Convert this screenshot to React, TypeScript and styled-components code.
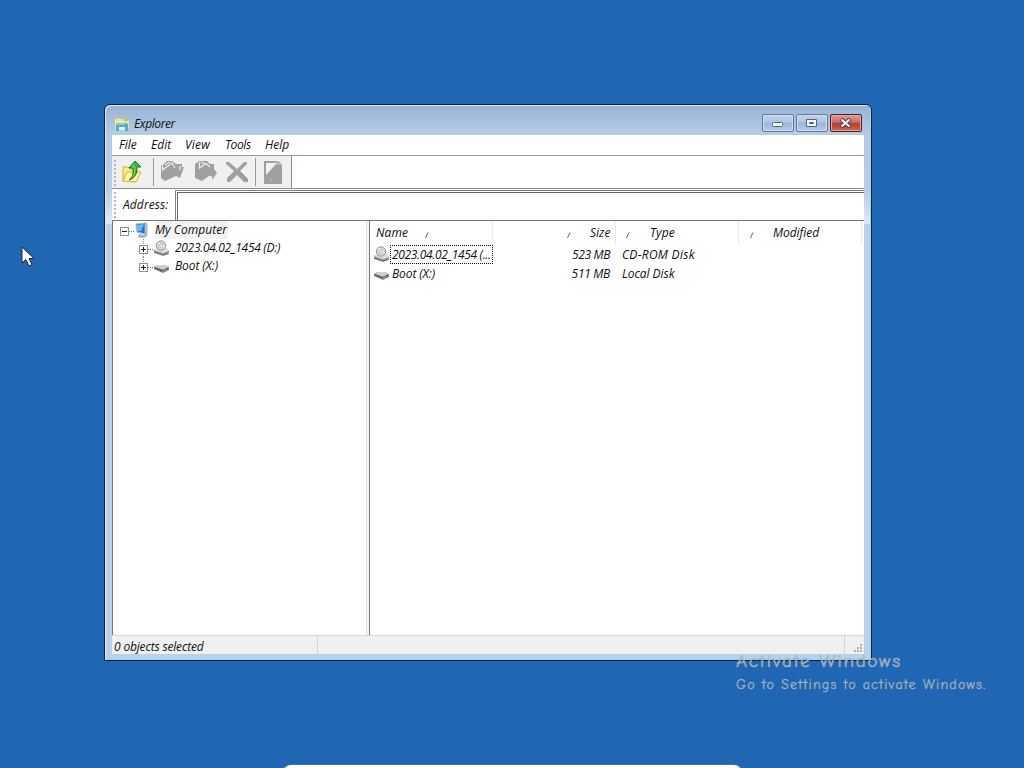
import React from 'react';
import styled, { createGlobalStyle } from 'styled-components';

const Global = createGlobalStyle`
  * { box-sizing: border-box; }
  body { margin: 0; overflow: hidden; background: #1f67b3; }
`;

const Desktop = styled.div`
  position: relative;
  width: 1024px;
  height: 768px;
  overflow: hidden;
  background: #1f67b3;
  color: #101010;
  font: italic 12px/18px 'Open Sans', 'Noto Sans', sans-serif;
  white-space: nowrap;
`;

const Window = styled.section`
  position: absolute;
  left: 104px;
  top: 104px;
  width: 768px;
  height: 557px;
  display: flex;
  flex-direction: column;
  padding: 0 7px 6px;
  border: 1px solid #0b2038;
  border-radius: 6px 6px 1px 1px;
  background: linear-gradient(#98b4d5 0, #b5cbe6 29px, #b7cce5 85px, #deebf7 118px, #b9d1ea 120px, #b9d1ea 100%);
  box-shadow: inset 1px 1px 0 #dcebf8, inset -1px -1px 0 #8fd8ee;
`;

const TitleBar = styled.header`
  display: flex;
  align-items: center;
  flex: 0 0 30px;
  padding: 8px 2px 0 2px;
`;

const Label = styled.span<{ $spacing?: number; $bg?: string }>`
  letter-spacing: ${(p) => p.$spacing ?? -0.3}px;
  background: ${(p) => p.$bg ?? 'transparent'};
`;

const TitleText = styled(Label)`
  flex: 1;
  margin-left: 4px;
`;

const Captions = styled.div`
  display: flex;
  gap: 2px;
  margin-top: -3px;
`;

const CaptionButton = styled.button<{ $close?: boolean }>`
  display: grid;
  place-items: center;
  width: 32px;
  height: 18px;
  padding: 0;
  border: 1px solid ${(p) => (p.$close ? '#561b23' : '#61779b')};
  border-radius: 2px;
  background: ${(p) =>
    p.$close
      ? 'linear-gradient(#dc9d95 0, #cb7065 45%, #b63b31 50%, #ca6653 100%)'
      : 'linear-gradient(#c1d3ea 0, #afc6e1 45%, #98b4d5 50%, #b4cdea 100%)'};
  box-shadow: inset 0 0 0 1px ${(p) => (p.$close ? '#e2a79c' : '#ccdef2')};
`;

const Client = styled.div`
  display: flex;
  flex-direction: column;
  flex: 1;
  min-height: 0;
  background: #fff;
`;

const MenuBar = styled.nav`
  display: flex;
  gap: 14px;
  flex: 0 0 21px;
  padding: 1px 0 0 7px;
  border-bottom: 1px solid #9b9b9b;
`;

const MenuItem = styled(Label)<{ $width: number }>`
  width: ${(p) => p.$width}px;
`;

const ToolBar = styled.div`
  display: flex;
  flex: 0 0 33px;
  border-bottom: 1px solid #8e8e8e;
`;

const ToolStrip = styled.div`
  display: flex;
  align-items: center;
  width: 180px;
  background: #f0f0f0;
  border-right: 1px solid #8b8b8b;
`;

const Grip = styled.i<{ $gap?: number }>`
  width: 2px;
  height: 27px;
  margin: 2px ${(p) => p.$gap ?? 4}px 0 2px;
  background: repeating-linear-gradient(#b8b8b8 0 2px, transparent 2px 4px);
`;

const ToolSlot = styled.div<{ $width: number; $divider?: boolean; $trim?: number }>`
  display: flex;
  justify-content: center;
  align-items: center;
  width: ${(p) => p.$width}px;
  height: 28px;
  padding-right: ${(p) => p.$trim ?? 0}px;
  border-right: ${(p) => (p.$divider ? '1px solid #999' : '0')};
`;

const AddressBar = styled.div`
  display: flex;
  flex: 0 0 31px;
  background: #fff;
`;

const AddressLabel = styled.div`
  display: flex;
  align-items: center;
  width: 63px;
`;

const AddressInput = styled.div`
  flex: 1;
  margin-top: 1px;
  border: 1px solid #808080;
  border-width: 1px 0 0 1px;
  box-shadow: inset 1px 1px 0 #fff, inset 2px 2px 0 #696969;
`;

const Body = styled.main`
  display: flex;
  flex: 1;
  min-height: 0;
  border-top: 1px solid #777;
`;

const Tree = styled.div`
  width: 255px;
  border-left: 1px solid #777;
  border-right: 1px solid #e2e2e2;
`;

const Splitter = styled.div`
  width: 2px;
  background: #f4f4f4;
`;

const TreeRow = styled.div<{ $child?: boolean }>`
  display: flex;
  align-items: center;
  height: 18px;
  padding-left: ${(p) => (p.$child ? 25 : 6)}px;
`;

const Expander = styled.span`
  width: 15px;
  height: 18px;
`;

const TreeLabel = styled(Label)`
  margin-left: 5px;
  padding-right: 1px;
`;

const List = styled.div`
  flex: 1;
  border-left: 1px solid #777;
`;

const HeaderRow = styled.div`
  display: flex;
  height: 24px;
  line-height: 24px;
`;

const Column = styled.div<{ $width: number }>`
  display: flex;
  width: ${(p) => p.$width}px;
  border-right: 1px solid #e9e9e9;
`;

const ColumnTitle = styled(Label)<{ $offset: number; $width?: number }>`
  flex: 0 0 auto;
  width: ${(p) => (p.$width ? `${p.$width}px` : 'auto')};
  margin-left: ${(p) => p.$offset}px;
`;

const SortArrow = styled.svg<{ $offset: number }>`
  flex: none;
  margin-left: ${(p) => p.$offset}px;
`;

const ListRow = styled.div`
  display: flex;
  align-items: center;
  height: 19px;
  padding-left: 3px;
`;

const NameCell = styled.div<{ $focus?: boolean }>`
  width: 103px;
  height: 19px;
  line-height: 17px;
  padding-left: 1px;
  overflow: hidden;
  border: 1px ${(p) => (p.$focus ? 'dotted #111' : 'solid transparent')};
`;

const SizeCell = styled.div`
  width: 117px;
  text-align: right;
`;

const TypeCell = styled.div`
  margin-left: 12px;
`;

const StatusBar = styled.footer`
  display: flex;
  flex: 0 0 19px;
  line-height: 21px;
  border-top: 1px solid #d5d5d5;
  background: #f0f0f0;
`;

const StatusPane = styled.div<{ $width: number }>`
  width: ${(p) => p.$width}px;
  height: 18px;
  padding-left: 2px;
  border-right: 1px solid #d5d5d5;
`;

const SizeGrip = styled.svg`
  margin: 7px 0 0 7px;
`;

const Watermark = styled.div`
  position: absolute;
  left: 736px;
  top: 649px;
  color: rgba(173, 181, 190, 0.84);
  font-style: normal;
  font-family: 'Comic Neue', 'Comic Sans MS', 'Comic Relief', cursive;
`;

const WatermarkTitle = styled.div`
  font-size: 19px;
  line-height: 24px;
  letter-spacing: 1.7px;
  -webkit-text-stroke: 0.6px rgba(173, 181, 190, 0.84);
`;

const WatermarkText = styled.div`
  font-size: 14px;
  line-height: 24px;
  letter-spacing: 1.2px;
  -webkit-text-stroke: 0.4px rgba(173, 181, 190, 0.84);
`;

const Pointer = styled.svg`
  position: absolute;
  left: 21px;
  top: 246px;
`;

const BottomPanel = styled.div`
  position: absolute;
  left: 283px;
  top: 765px;
  width: 459px;
  height: 20px;
  border-radius: 8px;
  background: #fff;
  box-shadow: 0 0 1px 1px #50708c;
`;

const ExplorerIcon = () => (
  <svg width="16" height="16" viewBox="0 0 16 16">
    <path d="M1 3V1.5H6L7 3H14V13H1Z" fill="#e3c562" />
    <path d="M2 3H14L15 5V13H1V4Z" fill="#f5e59b" />
    <path d="M10 2H14V5H10Z" fill="#a5c978" />
    <path d="M2 15V9Q2 7 5 7H11Q14 7 14 9V15H11V11H5V15Z" fill="#50a8d8" />
    <path d="M3 9Q4 8 6 8H11" stroke="#bce8fa" fill="none" />
    <path d="M5 11H11V14H5Z" fill="#e8f4f6" />
  </svg>
);

const UpIcon = () => (
  <svg width="24" height="26" viewBox="0 0 24 26">
    <path d="M3 8H8L10 10H16V22H3Z" fill="#f7ee83" stroke="#c9b43b" />
    <path d="M3 22L7 13H21L16 23Z" fill="#fff69c" stroke="#cdb33c" />
    <path d="M9 21Q14 18 13 9H9L15 2L21 8H17Q18 18 9 21Z" fill="#38b832" stroke="#167b20" />
    <path d="M14 5L12 8H15Q15 14 13 18" fill="none" stroke="#86de69" />
  </svg>
);

const FolderToolIcon = ({ move = false }: { move?: boolean }) => (
  <svg width="25" height="24" viewBox="0 0 25 24">
    {move ? (
      <>
        <path d="M2 4L6 1H14L17 4H21V9L24 13L19 20V16H16L9 21L2 18Z" fill="#a0a0a0" />
        <path d="M6.5 2V8L13 3.5L17 7M8 2L12 4" fill="none" stroke="#f0f0f0" strokeWidth="1.2" />
      </>
    ) : (
      <>
        <path d="M1 5L4 4L7 1H12L16 4L22 4V7H24L20 18L16 16L5 21L1 18Z" fill="#a0a0a0" />
        <path d="M2.5 4V10L12 3L15 8M5 5L10 2M20 6V10" fill="none" stroke="#f0f0f0" strokeWidth="1.2" />
      </>
    )}
  </svg>
);

const DeleteIcon = () => (
  <svg width="24" height="24" viewBox="0 0 24 24">
    <path d="M1 2H4L12 9L19 2H22V4L15 11L23 19V22H19L12 15L5 22H2V18L9 11L1 4Z" fill="#a0a0a0" />
    <path d="M14 11L22 19" stroke="#878787" />
  </svg>
);

const PropertiesIcon = () => (
  <svg width="20" height="25" viewBox="0 0 20 25">
    <path d="M1 1H15L19 4V24H1Z" fill="#a0a0a0" />
    <path d="M3 3H14L3 15Z" fill="#f2f2f2" />
    <path d="M14 1V4H19" fill="none" stroke="#d3d3d3" />
    <path d="M8 19V20" stroke="#f2f2f2" />
  </svg>
);

const ComputerIcon = () => (
  <svg width="16" height="17" viewBox="0 0 16 17">
    <path d="M2 2L11 1V12L3 10Z" fill="#2277d2" stroke="#8dbde1" />
    <path d="M3 3L10 2L7 9L3 9Z" fill="#68baf2" />
    <path d="M11 1L13 2V13L11 14Z" fill="#c5d3de" stroke="#6f8aa1" strokeWidth=".6" />
    <path d="M5 12L10 13L13 15L8 16L4 15Z" fill="#9db4c2" />
  </svg>
);

const CdIcon = () => (
  <svg width="17" height="17" viewBox="0 0 17 17">
    <path d="M1 10L5 8H13L16 11V14L10 16L1 13Z" fill="#a1a1a1" />
    <path d="M1 10L5 8H13L16 11L10 13Z" fill="#ddd" />
    <path d="M1 12L10 15L15 13" fill="none" stroke="#666" />
    <circle cx="8" cy="5.5" r="4.7" fill="#d5d5d5" stroke="#969696" />
    <path d="M8 5L5 2M8 5L12 7" stroke="#fff" />
    <circle cx="8" cy="5.5" r="1.4" fill="#fff" stroke="#aaa" strokeWidth=".7" />
  </svg>
);

const DiskIcon = () => (
  <svg width="17" height="17" viewBox="0 0 17 17">
    <path d="M1 8.5L5 7H12L16 9V12L10 15L1 11Z" fill="#858585" />
    <path d="M1 8.5L5 7H12L16 9L10 11.5Z" fill="#d0d0d0" />
    <path d="M2 10L9 13L15 10" fill="none" stroke="#4e4e4e" />
    <path d="M10 13L13 11.5" stroke="#9db38f" />
  </svg>
);

const TreeMark = ({ plus = false, last = false }: { plus?: boolean; last?: boolean }) => (
  <Expander>
    <svg width="15" height="18" shapeRendering="crispEdges">
      {plus && <path d={last ? 'M5.5 0V6' : 'M5.5 0V6M5.5 15V18'} stroke="#888" strokeDasharray="1 1" />}
      <rect x="1.5" y="6.5" width="8" height="8" fill="#fff" stroke="#929292" />
      <path d={plus ? 'M3 10.5H8M5.5 8V13' : 'M3 10.5H8'} stroke="#222" />
      <path d="M10 10.5H15" stroke="#777" strokeDasharray="1 1" />
    </svg>
  </Expander>
);

const SortMark = ({ offset }: { offset: number }) => (
  <SortArrow $offset={offset} width="6" height="24"><path d="M1.5 17L4 11.5" stroke="#666" fill="none" /></SortArrow>
);

export default function App() {
  return (
    <Desktop>
      <Global />
      <Window>
        <TitleBar>
          <ExplorerIcon />
          <TitleText $spacing={-0.4}>Explorer</TitleText>
          <Captions>
            <CaptionButton aria-label="Minimize">
              <svg width="14" height="10"><rect x="1.5" y="4.5" width="10" height="4" rx="1" fill="#f7fbff" stroke="#53657f" /></svg>
            </CaptionButton>
            <CaptionButton aria-label="Maximize">
              <svg width="12" height="10"><path d="M.5 1.5H10.5V8.5H.5ZM3.5 4.5V5.5H7.5V4.5Z" fill="#f7fbff" stroke="#53657f" fillRule="evenodd" /></svg>
            </CaptionButton>
            <CaptionButton $close aria-label="Close">
              <svg width="14" height="10"><path d="M2 1L11 9M11 1L2 9" stroke="#5b3444" strokeWidth="4" /><path d="M2.5 1.5L10.5 8.5M10.5 1.5L2.5 8.5" stroke="#fff" strokeWidth="2.3" /></svg>
            </CaptionButton>
          </Captions>
        </TitleBar>
        <Client>
          <MenuBar>
            <MenuItem $width={18} $spacing={0}>File</MenuItem>
            <MenuItem $width={20} $spacing={0}>Edit</MenuItem>
            <MenuItem $width={26} $spacing={0.2}>View</MenuItem>
            <MenuItem $width={26} $spacing={-0.4}>Tools</MenuItem>
            <MenuItem $width={26} $spacing={0}>Help</MenuItem>
          </MenuBar>
          <ToolBar>
            <ToolStrip>
              <Grip />
              <ToolSlot $width={34} $divider $trim={9}><UpIcon /></ToolSlot>
              <ToolSlot $width={36}><FolderToolIcon /></ToolSlot>
              <ToolSlot $width={30}><FolderToolIcon move /></ToolSlot>
              <ToolSlot $width={36} $divider $trim={2}><DeleteIcon /></ToolSlot>
              <ToolSlot $width={34}><PropertiesIcon /></ToolSlot>
            </ToolStrip>
          </ToolBar>
          <AddressBar>
            <AddressLabel><Grip $gap={7} /><Label $spacing={0.1}>Address:</Label></AddressLabel>
            <AddressInput />
          </AddressBar>
          <Body>
            <Tree>
              <TreeRow><TreeMark /><ComputerIcon /><TreeLabel $bg="#f2f2f2" $spacing={0.05}>My Computer</TreeLabel></TreeRow>
              <TreeRow $child><TreeMark plus /><CdIcon /><TreeLabel>2023.04.02_1454 (D:)</TreeLabel></TreeRow>
              <TreeRow $child><TreeMark plus last /><DiskIcon /><TreeLabel $spacing={-0.1}>Boot (X:)</TreeLabel></TreeRow>
            </Tree>
            <Splitter />
            <List>
              <HeaderRow>
                <Column $width={123}><ColumnTitle $offset={6} $width={32} $spacing={0.1}>Name</ColumnTitle><SortMark offset={16} /></Column>
                <Column $width={123}><SortMark offset={73} /><ColumnTitle $offset={18} $spacing={0}>Size</ColumnTitle></Column>
                <Column $width={123}><SortMark offset={9} /><ColumnTitle $offset={19} $spacing={0.1}>Type</ColumnTitle></Column>
                <Column $width={123}><SortMark offset={10} /><ColumnTitle $offset={18} $spacing={-0.05}>Modified</ColumnTitle></Column>
              </HeaderRow>
              <ListRow>
                <CdIcon /><NameCell $focus><Label $spacing={-0.35}>2023.04.02_1454 (...</Label></NameCell>
                <SizeCell><Label $spacing={-0.35}>523 MB</Label></SizeCell><TypeCell><Label $spacing={0.3}>CD-ROM Disk</Label></TypeCell>
              </ListRow>
              <ListRow>
                <DiskIcon /><NameCell><Label $spacing={-0.1}>Boot (X:)</Label></NameCell>
                <SizeCell><Label $spacing={-0.3}>511 MB</Label></SizeCell><TypeCell><Label $spacing={-0.05}>Local Disk</Label></TypeCell>
              </ListRow>
            </List>
          </Body>
          <StatusBar>
            <StatusPane $width={206}><Label $spacing={-0.17}>0 objects selected</Label></StatusPane>
            <StatusPane $width={527} />
            <SizeGrip width="11" height="11" shapeRendering="crispEdges">
              <path d="M9 1V3M6 4V6M9 4V6M3 7V9M6 7V9M9 7V9" stroke="#b0b0b0" strokeWidth="2" />
            </SizeGrip>
          </StatusBar>
        </Client>
      </Window>
      <Watermark>
        <WatermarkTitle>Activate Windows</WatermarkTitle>
        <WatermarkText>Go to Settings to activate Windows.</WatermarkText>
      </Watermark>
      <Pointer width="14" height="22" viewBox="0 0 14 22">
        <path d="M1 1V17L4.8 13.5L8 20L11 18.5L8 12.5H13Z" fill="#fff" stroke="#17253d" />
      </Pointer>
      <BottomPanel />
    </Desktop>
  );
}
